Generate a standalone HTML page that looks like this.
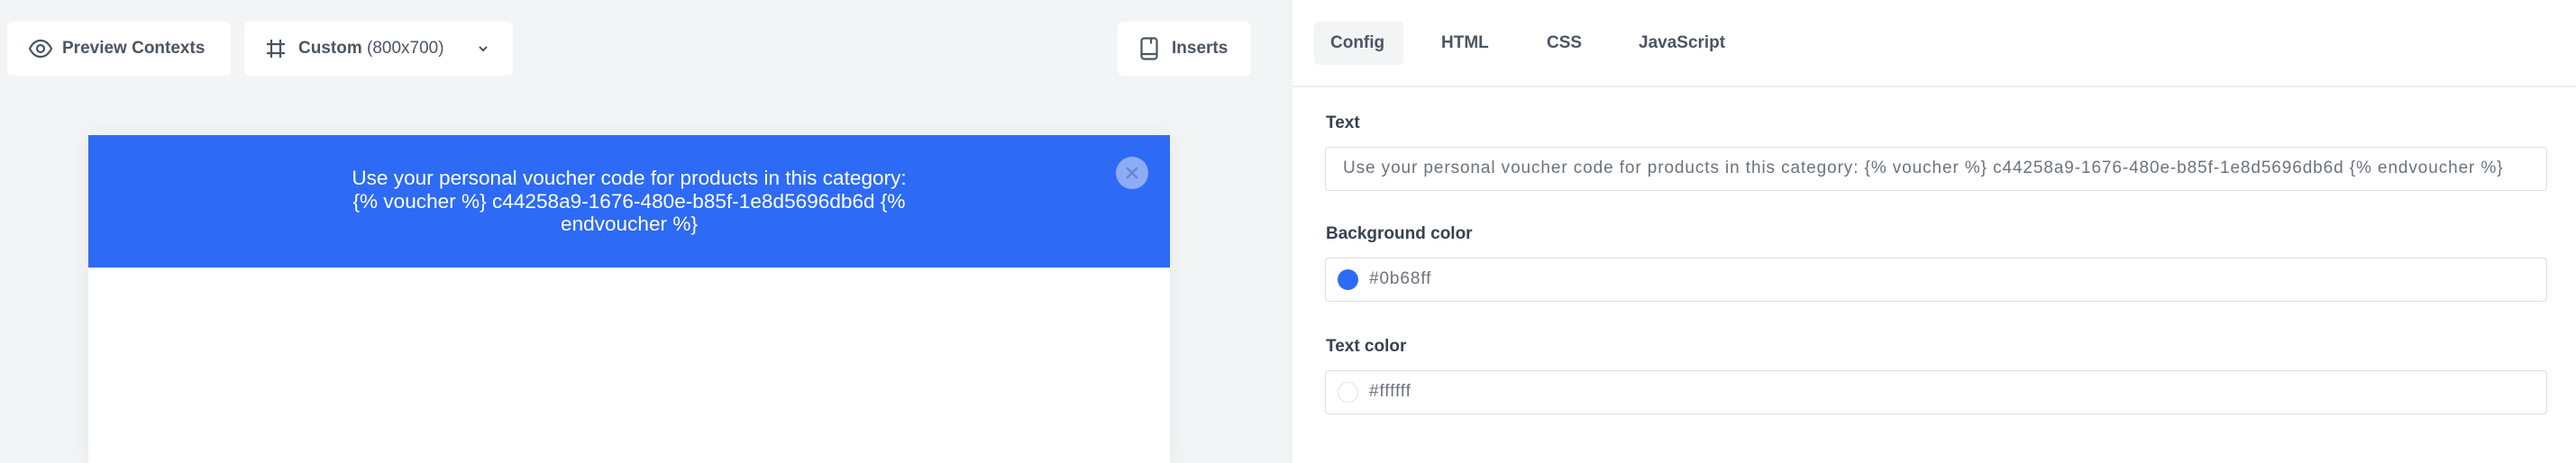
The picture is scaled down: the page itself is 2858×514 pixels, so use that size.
<!DOCTYPE html>
<html><head><meta charset="utf-8"><style>
*{box-sizing:border-box;margin:0;padding:0}
html,body{width:2858px;height:514px;overflow:hidden}
body{background:#fff;font-family:"Liberation Sans",sans-serif;position:relative}
.left{position:absolute;left:0;top:0;width:1434px;height:514px;background:#f3f4f6;overflow:hidden}
.btn{position:absolute;top:24px;height:60px;background:#fff;border-radius:6px;color:#4b5563;font-size:19px;font-weight:bold;display:flex;align-items:center}
.btn svg{position:absolute}
.card{position:absolute;left:98px;top:150px;width:1200px;height:364px;background:#fff;box-shadow:0 0 20px rgba(0,0,0,0.06)}
.banner{position:absolute;left:0;top:0;width:1200px;height:147px;background:#2d6af6;color:#fff;font-size:22.6px;text-align:center;line-height:25.5px;padding-top:35px}
.close{position:absolute;left:1140px;top:24px;width:36px;height:36px;border-radius:50%;background:#8eabf5}
.tab{position:absolute;top:24px;height:48px;line-height:48px;font-size:19px;font-weight:bold;color:#4b5563}
.lbl{position:absolute;left:1471px;font-size:19px;font-weight:bold;color:#374151}
.inp{position:absolute;left:1470px;width:1356px;height:49px;border:1.5px solid #dcdfe3;border-radius:4px;font-size:19px;letter-spacing:0.9px;color:#6b7280;line-height:46px;white-space:nowrap;overflow:hidden}
.dot{position:absolute;left:13px;top:12px;width:23px;height:23px;border-radius:50%}
</style></head><body>
<div class="left">
<div class="btn" style="left:8px;width:248px"><svg style="left:23px" width="28" height="22" viewBox="0 0 28 22"><path d="M2 11C5 5 9 2 14 2s9 3 12 9c-3 6-7 9-12 9S5 17 2 11z" fill="none" stroke="#4b5563" stroke-width="2.2"/><circle cx="14" cy="11" r="4" fill="none" stroke="#4b5563" stroke-width="2.2"/></svg><span style="margin-left:61px">Preview Contexts</span></div>
<div class="btn" style="left:271px;width:298px"><svg style="left:24px" width="22" height="22" viewBox="0 0 22 22"><path d="M6 1v20M16 1v20M1 6h20M1 16h20" stroke="#4b5563" stroke-width="2.2" fill="none"/></svg><span style="margin-left:60px">Custom <span style="font-weight:normal">(800x700)</span></span><svg style="left:258px" width="14" height="10" viewBox="0 0 14 10"><path d="M3 3l4 4 4-4" stroke="#4b5563" stroke-width="2" fill="none"/></svg></div>
<div class="btn" style="left:1240px;width:148px"><svg style="left:25px" width="20" height="26" viewBox="0 0 20 26"><rect x="1.5" y="1.5" width="17" height="23" rx="3" fill="none" stroke="#4b5563" stroke-width="2.2"/><path d="M1.5 19h17M12 1.5v6" stroke="#4b5563" stroke-width="2.2"/></svg><span style="margin-left:60px">Inserts</span></div>
<div class="card"><div class="banner">Use your personal voucher code for products in this category:<br>{% voucher %} c44258a9-1676-480e-b85f-1e8d5696db6d {%<br>endvoucher %}</div>
<div class="close"><svg width="36" height="36" viewBox="0 0 36 36"><path d="M12 12l12 12M24 12L12 24" stroke="#6a88cf" stroke-width="2.4"/></svg></div></div>
</div>
<div style="position:absolute;left:1458px;top:24px;width:99px;height:48px;background:#f3f4f6;border-radius:5px"></div>
<div class="tab" style="left:1476px">Config</div>
<div class="tab" style="left:1599px">HTML</div>
<div class="tab" style="left:1716px">CSS</div>
<div class="tab" style="left:1818px">JavaScript</div>
<div style="position:absolute;left:1434px;top:95px;width:1424px;height:2px;background:#eceef1"></div>
<div class="lbl" style="top:126px">Text</div>
<div class="inp" style="top:163px;padding-left:19px">Use your personal voucher code for products in this category: {% voucher %} c44258a9-1676-480e-b85f-1e8d5696db6d {% endvoucher %}</div>
<div class="lbl" style="top:249px">Background color</div>
<div class="inp" style="top:286px;padding-left:48px"><div class="dot" style="background:#2d6af6"></div>#0b68ff</div>
<div class="lbl" style="top:374px">Text color</div>
<div class="inp" style="top:411px;padding-left:48px"><div class="dot" style="background:#fff;border:1px solid #e3e5e8"></div>#ffffff</div>
</body></html>
